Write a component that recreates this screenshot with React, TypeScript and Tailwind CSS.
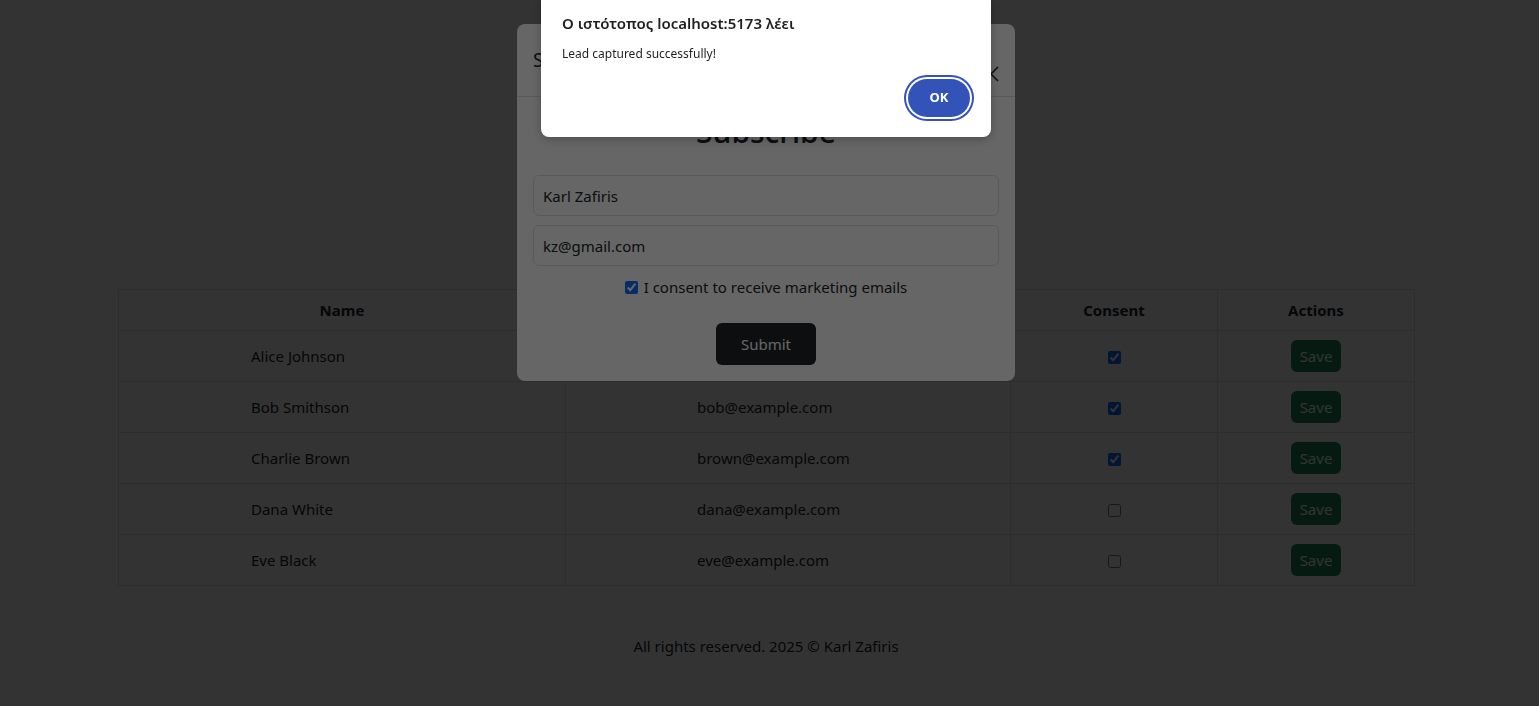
const leads = [
  { name: "Alice Johnson", email: "alice@example.com", consent: true },
  { name: "Bob Smithson", email: "bob@example.com", consent: true },
  { name: "Charlie Brown", email: "brown@example.com", consent: true },
  { name: "Dana White", email: "dana@example.com", consent: false },
  { name: "Eve Black", email: "eve@example.com", consent: false },
];

const font = "font-['Noto_Sans','Open_Sans',sans-serif]";

const LeadTable = () => (
  <table className="w-full table-fixed border-collapse border border-[#dee2e6] text-[15px]">
    <colgroup>
      <col className="w-[447px]" />
      <col className="w-[445px]" />
      <col className="w-[207px]" />
      <col className="w-[197px]" />
    </colgroup>
    <thead>
      <tr className="h-[41px] border-b border-[#dee2e6]">
        <th className="border border-[#dee2e6] font-bold">Name</th>
        <th className="border border-[#dee2e6] font-bold">Email</th>
        <th className="border border-[#dee2e6] font-bold">Consent</th>
        <th className="border border-[#dee2e6] font-bold">Actions</th>
      </tr>
    </thead>
    <tbody>
      {leads.map((l) => (
        <tr key={l.email} className="h-[51px]">
          <td className="border border-[#dee2e6] pl-[132px]">{l.name}</td>
          <td className="border border-[#dee2e6] pl-[131px]">{l.email}</td>
          <td className="border border-[#dee2e6] text-center">
            <input
              type="checkbox"
              defaultChecked={l.consent}
              className="align-middle accent-[#0d6efd]"
            />
          </td>
          <td className="border border-[#dee2e6] text-center">
            <button className="h-8 w-[50px] rounded-md bg-[#198754] text-[15px] text-white">
              Save
            </button>
          </td>
        </tr>
      ))}
    </tbody>
  </table>
);

const CloseIcon = () => (
  <svg width="16" height="16" viewBox="0 0 16 16" className="mt-[21px] text-[#212529]">
    <path d="M1 1L15 15M15 1L1 15" stroke="currentColor" strokeWidth="1.6" fill="none" />
  </svg>
);

const SubscribeModal = () => (
  <div className="h-fit w-[498px] rounded-lg bg-white">
    {/* Header */}
    <div className="flex h-[73px] items-start justify-between border-b border-[#dee2e6] pr-4 pl-4 pt-[21px]">
      <h5 className="text-[19px] leading-[30px]">Subscribe</h5>
      <CloseIcon />
    </div>

    {/* Body */}
    <div className="p-4">
      <h2 className="mb-6 text-center text-[30px] leading-[38px] font-medium">Subscribe</h2>
      <div className="flex flex-col gap-[9px]">
        <input
          defaultValue="Karl Zafiris"
          className="h-[41px] w-full rounded-md border border-[#dee2e6] px-[9px] text-[15px] outline-none"
        />
        <input
          defaultValue="kz@gmail.com"
          className="h-[41px] w-full rounded-md border border-[#dee2e6] px-[9px] text-[15px] outline-none"
        />
      </div>
      <label className="mt-[9px] flex h-6 items-center justify-center gap-1.5 text-[15px]">
        <input type="checkbox" defaultChecked className="accent-[#0d6efd]" />
        I consent to receive marketing emails
      </label>
      <div className="mt-6 flex justify-center">
        <button className="h-[42px] w-[100px] rounded-md bg-[#212529] text-[15px] text-white">
          Submit
        </button>
      </div>
    </div>
  </div>
);

const BrowserAlert = () => (
  <div className="relative h-[137px] w-[450px] rounded-b-lg bg-white px-[21px] shadow-[0_2px_8px_rgba(0,0,0,0.25)]">
    <p className="pt-[12px] text-[15px] leading-[22px] font-semibold text-[#1f1f1f]">
      Ο ιστότοπος localhost:5173 λέει
    </p>
    <p className="mt-[12px] text-[12px] leading-[16px] text-[#1f1f1f]">
      Lead captured successfully!
    </p>
    <div className="absolute right-[21px] bottom-[20px]">
      <button className="h-[38px] w-[62px] rounded-full bg-[#3353b9] text-[13px] font-bold text-white ring-2 ring-[#3353b9] ring-offset-2 ring-offset-white">
        OK
      </button>
    </div>
  </div>
);

export default function App() {
  return (
    <div className={`relative min-h-screen bg-white text-[#212529] ${font}`}>
      <main className="pr-[7px]">
        <div className="mx-auto w-[1296px] pt-[289px]">
          <LeadTable />
        </div>
        <footer className="mt-12 text-center text-[15px] leading-6">
          All rights reserved. 2025 © Karl Zafiris
        </footer>
      </main>

      {/* Modal backdrop */}
      <div className="fixed inset-0 bg-black/50" />
      <div className="fixed inset-0 flex justify-center pt-6 pr-[7px]">
        <SubscribeModal />
      </div>

      {/* Browser dialog dim + alert */}
      <div className="fixed inset-0 bg-black/60" />
      <div className="fixed inset-x-0 top-0 flex justify-center pr-[7px]">
        <BrowserAlert />
      </div>
    </div>
  );
}
